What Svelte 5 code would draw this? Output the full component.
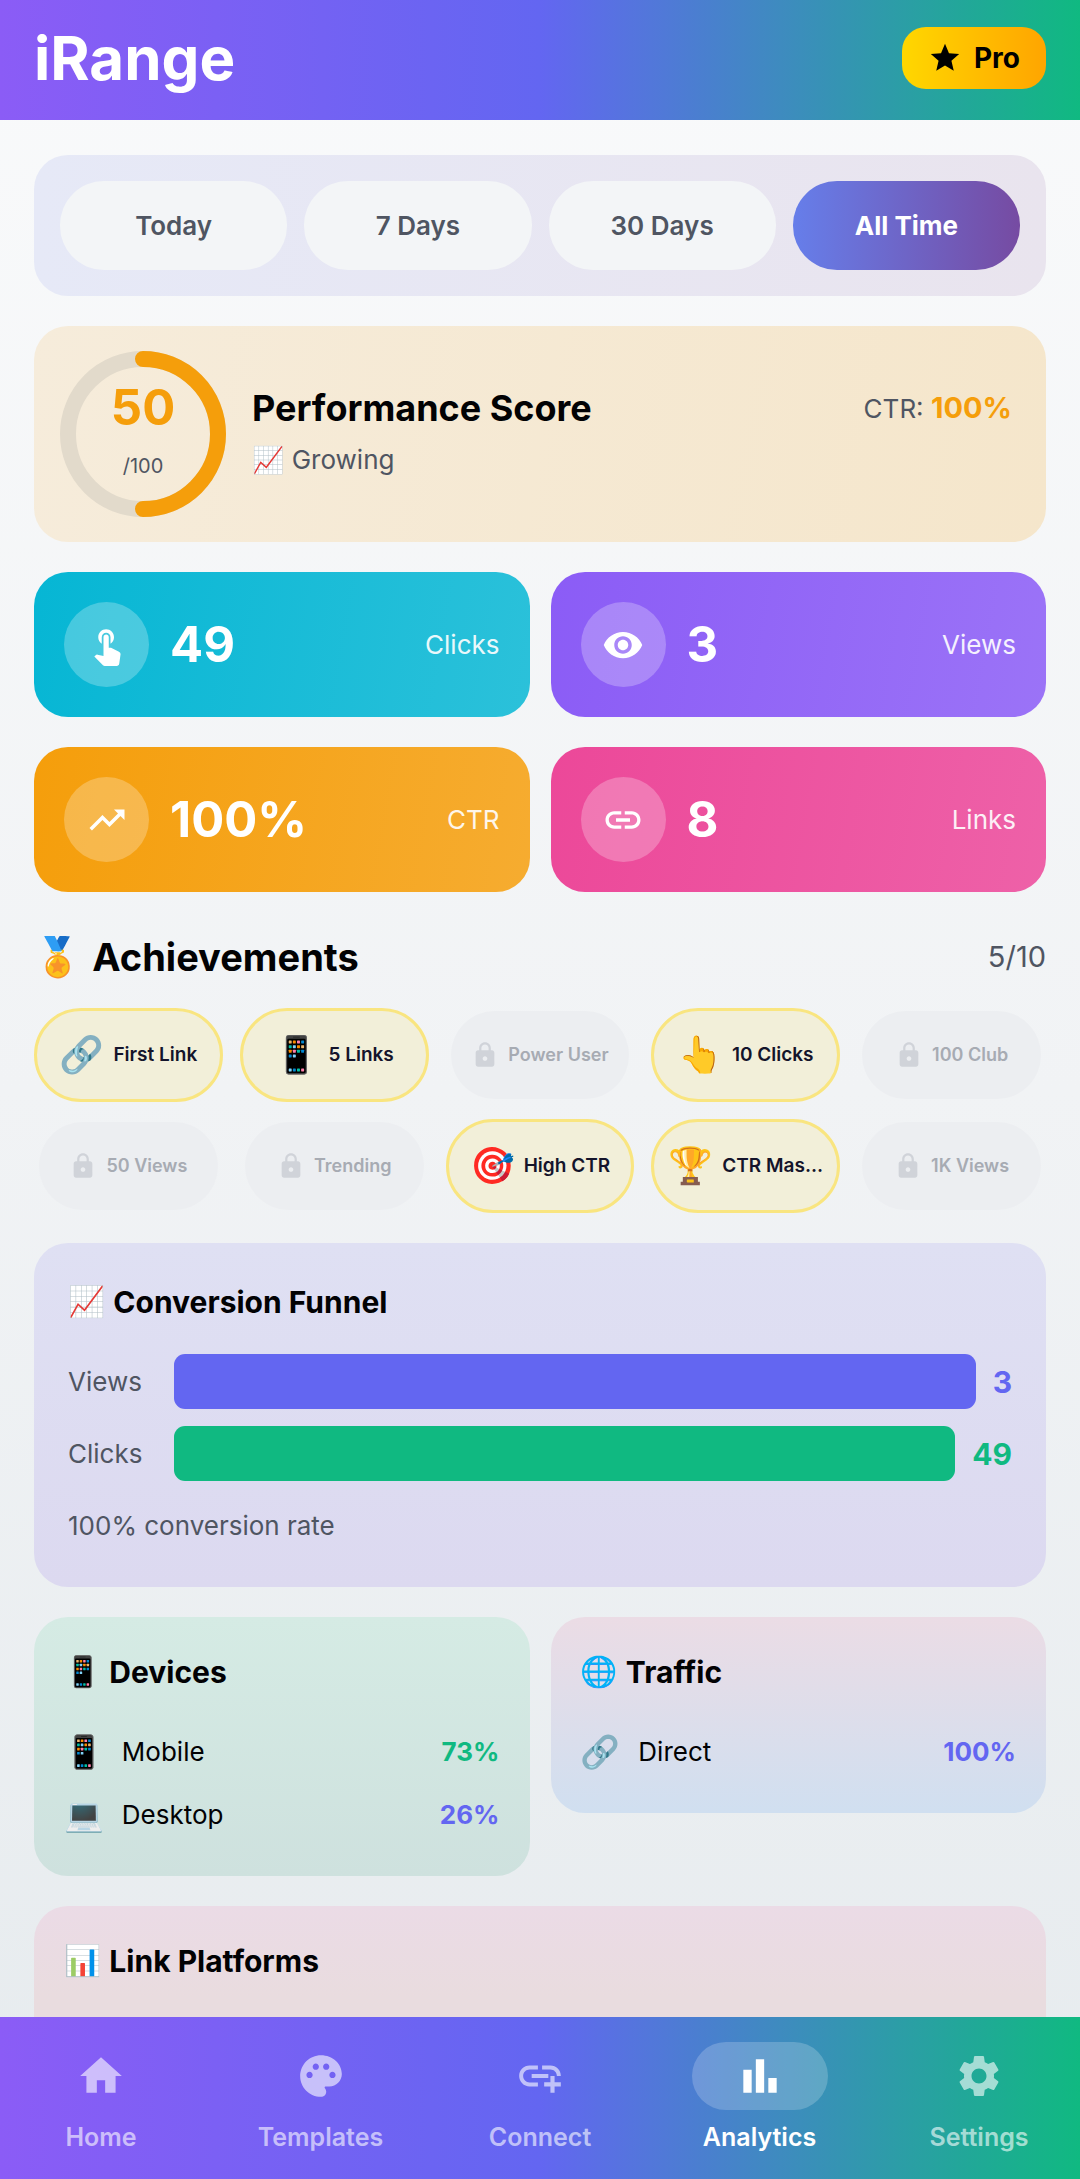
<script>
  const ranges = ['Today', '7 Days', '30 Days', 'All Time'];
  let range = $state('All Time');
  let tab = $state('Analytics');

  const icons = {
    tap: 'M9 11.24V7.5a2.5 2.5 0 0 1 5 0v3.74c1.21-.81 2-2.18 2-3.74C16 5.01 13.99 3 11.5 3S7 5.01 7 7.5c0 1.56.79 2.93 2 3.74zm9.84 4.63-4.54-2.26c-.17-.07-.35-.11-.54-.11H13v-6c0-.83-.67-1.5-1.5-1.5S10 6.67 10 7.5v10.74l-3.43-.72c-.08-.01-.15-.03-.24-.03-.31 0-.59.13-.79.33l-.79.8 4.94 4.94c.27.27.65.44 1.06.44h6.79c.75 0 1.33-.55 1.44-1.28l.75-5.27c.01-.07.02-.14.02-.2 0-.62-.38-1.16-.91-1.38z',
    eye: 'M12 4.5C7 4.5 2.73 7.61 1 12c1.73 4.39 6 7.5 11 7.5s9.27-3.11 11-7.5c-1.73-4.39-6-7.5-11-7.5zM12 17c-2.76 0-5-2.24-5-5s2.24-5 5-5 5 2.24 5 5-2.24 5-5 5zm0-8c-1.66 0-3 1.34-3 3s1.34 3 3 3 3-1.34 3-3-1.34-3-3-3z',
    trend: 'm16 6 2.29 2.29-4.88 4.88-4-4L2 16.59 3.41 18l6-6 4 4 6.3-6.29L22 12V6z',
    link: 'M3.9 12c0-1.71 1.39-3.1 3.1-3.1h4V7H7c-2.76 0-5 2.24-5 5s2.24 5 5 5h4v-1.9H7c-1.71 0-3.1-1.39-3.1-3.1zM8 13h8v-2H8v2zm9-6h-4v1.9h4c1.71 0 3.1 1.39 3.1 3.1s-1.39 3.1-3.1 3.1h-4V17h4c2.76 0 5-2.24 5-5s-2.24-5-5-5z',
    lock: 'M18 8h-1V6c0-2.76-2.24-5-5-5S7 3.24 7 6v2H6c-1.1 0-2 .9-2 2v10c0 1.1.9 2 2 2h12c1.1 0 2-.9 2-2V10c0-1.1-.9-2-2-2zm-6 9c-1.1 0-2-.9-2-2s.9-2 2-2 2 .9 2 2-.9 2-2 2zm3.1-9H8.9V6c0-1.71 1.39-3.1 3.1-3.1s3.1 1.39 3.1 3.1v2z',
    star: 'M12 17.27 18.18 21l-1.64-7.03L22 9.24l-7.19-.61L12 2 9.19 8.63 2 9.24l5.46 4.73L5.82 21z',
    home: 'M10 20v-6h4v6h5v-8h3L12 3 2 12h3v8z',
    palette: 'M12 2C6.49 2 2 6.49 2 12s4.49 10 10 10c1.38 0 2.5-1.12 2.5-2.5 0-.61-.23-1.2-.64-1.67-.08-.1-.13-.21-.13-.33 0-.28.22-.5.5-.5H16c3.31 0 6-2.69 6-6 0-4.96-4.49-9-10-9zm-5.5 11c-.83 0-1.5-.67-1.5-1.5S5.67 10 6.5 10s1.5.67 1.5 1.5S7.33 13 6.5 13zm3-4C8.67 9 8 8.33 8 7.5S8.67 6 9.5 6s1.5.67 1.5 1.5S10.33 9 9.5 9zm5 0c-.83 0-1.5-.67-1.5-1.5S13.67 6 14.5 6s1.5.67 1.5 1.5S15.33 9 14.5 9zm3 4c-.83 0-1.5-.67-1.5-1.5s.67-1.5 1.5-1.5 1.5.67 1.5 1.5-.67 1.5-1.5 1.5z',
    addLink: 'M8 11h8v2H8zm12.1 1H22c0-2.76-2.24-5-5-5h-4v1.9h4c1.71 0 3.1 1.39 3.1 3.1zM3.9 12c0-1.71 1.39-3.1 3.1-3.1h4V7H7c-2.76 0-5 2.24-5 5s2.24 5 5 5h4v-1.9H7c-1.71 0-3.1-1.39-3.1-3.1zM19 12h-2v3h-3v2h3v3h2v-3h3v-2h-3z',
    bars: 'M4 9h4v11H4zm12 4h4v7h-4zm-6-9h4v16h-4z',
    gear: 'M19.14 12.94c.04-.3.06-.61.06-.94 0-.32-.02-.64-.07-.94l2.03-1.58c.18-.14.23-.41.12-.61l-1.92-3.32c-.12-.22-.37-.29-.59-.22l-2.39.96c-.5-.38-1.03-.7-1.62-.94l-.36-2.54c-.04-.24-.24-.41-.48-.41h-3.84c-.24 0-.43.17-.47.41l-.36 2.54c-.59.24-1.13.57-1.62.94l-2.39-.96c-.22-.08-.47 0-.59.22L2.74 8.87c-.12.21-.08.47.12.61l2.03 1.58c-.05.3-.09.63-.09.94s.02.64.07.94l-2.03 1.58c-.18.14-.23.41-.12.61l1.92 3.32c.12.22.37.29.59.22l2.39-.96c.5.38 1.03.7 1.62.94l.36 2.54c.05.24.24.41.48.41h3.84c.24 0 .44-.17.47-.41l.36-2.54c.59-.24 1.13-.56 1.62-.94l2.39.96c.22.08.47 0 .59-.22l1.92-3.32c.12-.22.07-.47-.12-.61l-2.01-1.58zM12 15.6c-1.98 0-3.6-1.62-3.6-3.6s1.62-3.6 3.6-3.6 3.6 1.62 3.6 3.6-1.62 3.6-3.6 3.6z',
  };

  const stats = [
    { icon: 'tap', value: '49', label: 'Clicks', tone: 'cyan' },
    { icon: 'eye', value: '3', label: 'Views', tone: 'violet' },
    { icon: 'trend', value: '100%', label: 'CTR', tone: 'amber' },
    { icon: 'link', value: '8', label: 'Links', tone: 'pink' },
  ];

  const badges = [
    { name: 'First Link', emoji: '🔗' },
    { name: '5 Links', emoji: '📱' },
    { name: 'Power User' },
    { name: '10 Clicks', emoji: '👆' },
    { name: '100 Club' },
    { name: '50 Views' },
    { name: 'Trending' },
    { name: 'High CTR', emoji: '🎯' },
    { name: 'CTR Mas...', emoji: '🏆' },
    { name: '1K Views' },
  ];

  const funnel = [
    { label: 'Views', value: 3, tone: 'indigo' },
    { label: 'Clicks', value: 49, tone: 'green' },
  ];

  const breakdowns = [
    {
      title: 'Devices',
      emoji: '📱',
      kind: 'devices',
      rows: [
        { emoji: '📱', name: 'Mobile', share: '73%', tone: 'green' },
        { emoji: '💻', name: 'Desktop', share: '26%', tone: 'indigo' },
      ],
    },
    {
      title: 'Traffic',
      emoji: '🌐',
      kind: 'traffic',
      rows: [{ emoji: '🔗', name: 'Direct', share: '100%', tone: 'indigo' }],
    },
  ];

  const tabs = [
    { name: 'Home', icon: 'home' },
    { name: 'Templates', icon: 'palette' },
    { name: 'Connect', icon: 'addLink' },
    { name: 'Analytics', icon: 'bars' },
    { name: 'Settings', icon: 'gear' },
  ];
</script>

{#snippet icon(name)}
  <svg class="icon" viewBox="0 0 24 24" aria-hidden="true"><path d={icons[name]} /></svg>
{/snippet}

<div class="app">
  <header class="topbar">
    <h1>iRange</h1>
    <button class="pro">{@render icon('star')}Pro</button>
  </header>

  <main>
    <div class="ranges">
      {#each ranges as r}
        <button class="range" class:active={range === r} onclick={() => (range = r)}>{r}</button>
      {/each}
    </div>

    <section class="score">
      <div class="ring">
        <svg viewBox="0 0 166 166" aria-hidden="true">
          <circle class="track" cx="83" cy="83" r="75" />
          <path class="arc" d="M83 8a75 75 0 0 1 0 150" />
        </svg>
        <div class="ring-text">
          <strong>50</strong>
          <span>/100</span>
        </div>
      </div>
      <div class="score-info">
        <h2>Performance Score</h2>
        <p><span class="emoji">📈</span> Growing</p>
      </div>
      <p class="ctr">CTR: <strong>100%</strong></p>
    </section>

    <section class="stats">
      {#each stats as s}
        <div class="stat {s.tone}">
          <span class="bubble">{@render icon(s.icon)}</span>
          <strong>{s.value}</strong>
          <span class="label">{s.label}</span>
        </div>
      {/each}
    </section>

    <section class="achievements">
      <div class="section-head">
        <span class="emoji">🏅</span>
        <h2>Achievements</h2>
        <span class="count">5/10</span>
      </div>
      <ul class="badges">
        {#each badges as b}
          <li class="badge" class:locked={!b.emoji}>
            {#if b.emoji}<span class="emoji">{b.emoji}</span>{:else}{@render icon('lock')}{/if}
            <span>{b.name}</span>
          </li>
        {/each}
      </ul>
    </section>

    <section class="funnel">
      <h3><span class="emoji">📈</span>Conversion Funnel</h3>
      {#each funnel as f}
        <div class="funnel-row">
          <span class="name">{f.label}</span>
          <div class="bar {f.tone}"></div>
          <strong class="{f.tone}-text">{f.value}</strong>
        </div>
      {/each}
      <p>100% conversion rate</p>
    </section>

    <div class="breakdowns">
      {#each breakdowns as b}
        <section class="panel {b.kind}">
          <h3><span class="emoji">{b.emoji}</span>{b.title}</h3>
          {#each b.rows as row}
            <div class="row">
              <span class="emoji">{row.emoji}</span>
              <span>{row.name}</span>
              <strong class="{row.tone}-text">{row.share}</strong>
            </div>
          {/each}
        </section>
      {/each}
    </div>

    <section class="panel platforms">
      <h3><span class="emoji">📊</span>Link Platforms</h3>
    </section>
  </main>

  <nav class="tabbar">
    {#each tabs as t}
      <button class="tab" class:active={tab === t.name} onclick={() => (tab = t.name)}>
        <span class="pill">{@render icon(t.icon)}</span>
        {t.name}
      </button>
    {/each}
  </nav>
</div>

<style>
  :global(body) {
    margin: 0;
  }

  .app {
    --ink: #020204;
    --muted: #4f5562;
    --indigo: #6366f1;
    --green: #10b981;
    --amber: #f59e0b;
    display: flex;
    flex-direction: column;
    height: 100vh;
    overflow: hidden;
    background: linear-gradient(#f9fafb, #f1f3f5 50%, #e6ebee);
    color: var(--ink);
    font-family: Inter, 'Noto Color Emoji', sans-serif;
    font-size: 26px;
    line-height: 36px;
  }

  .app :is(h1, h2, h3, p, ul) {
    margin: 0;
    padding: 0;
  }

  button {
    border: none;
    background: none;
    font: inherit;
    color: inherit;
    cursor: pointer;
  }

  .icon {
    display: block;
    flex: none;
    width: 42px;
    height: 42px;
    fill: currentColor;
  }

  .emoji {
    flex: none;
    font-family: 'Noto Color Emoji', sans-serif;
    font-weight: 400;
  }

  .topbar,
  .tabbar {
    flex: none;
    display: flex;
    justify-content: space-between;
    background: linear-gradient(90deg, #8b5cf6, #6366f1 50%, #10b981);
    color: #fff;
  }

  .topbar {
    box-sizing: border-box;
    align-items: center;
    height: 120px;
    padding: 0 34px 4px;
  }

  h1 {
    font-size: 60px;
    line-height: 72px;
    font-weight: 700;
  }

  .pro {
    display: flex;
    align-items: center;
    gap: 12px;
    height: 62px;
    padding: 0 26px;
    border-radius: 24px;
    background: linear-gradient(90deg, #ffd700, #ffa500);
    color: #000;
    font-size: 28px;
    font-weight: 700;
  }

  .pro .icon {
    width: 34px;
    height: 34px;
  }

  main {
    flex: 1;
    min-height: 0;
    display: flex;
    flex-direction: column;
    gap: 30px;
    padding: 35px 34px 0;
    overflow-y: auto;
    scrollbar-width: none;
  }

  main > * {
    flex: none;
  }

  .ranges {
    display: grid;
    grid-template-columns: repeat(4, 1fr);
    gap: 17px;
    padding: 26px;
    border-radius: 34px;
    background: linear-gradient(90deg, #e6e9f7, #e9e4ee);
  }

  .range {
    height: 89px;
    border-radius: 44px;
    background: #f3f5f7;
    color: var(--muted);
    font-weight: 600;
  }

  .range.active {
    background: linear-gradient(90deg, #667eea, #764ba2);
    color: #fff;
    font-weight: 700;
  }

  .score {
    display: flex;
    align-items: center;
    gap: 26px;
    padding: 25px 34px 25px 26px;
    border-radius: 34px;
    background: linear-gradient(100deg, #f6ecdb, #f5e6cb);
  }

  .ring {
    display: grid;
    width: 166px;
    height: 166px;
  }

  .ring > * {
    grid-area: 1 / 1;
  }

  .ring circle,
  .ring path {
    fill: none;
    stroke-width: 16;
    stroke-linecap: round;
  }

  .track {
    stroke: #e2dacb;
  }

  .arc {
    stroke: var(--amber);
  }

  .ring-text {
    display: flex;
    flex-direction: column;
    align-items: center;
    justify-content: center;
    color: var(--muted);
    font-size: 20px;
    line-height: 52px;
  }

  .ring-text strong {
    color: var(--amber);
    font-size: 49px;
    line-height: 64px;
  }

  .score-info {
    flex: 1;
  }

  .score h2 {
    font-size: 36px;
    line-height: 52px;
  }

  .score p {
    line-height: 52px;
    color: var(--muted);
  }

  .score .ctr {
    align-self: flex-start;
    padding-top: 31px;
  }

  .ctr strong {
    color: var(--amber);
    font-size: 29px;
  }

  .stats {
    display: grid;
    grid-template-columns: 1fr 1fr;
    gap: 30px 21px;
  }

  .stat {
    display: flex;
    align-items: center;
    gap: 21px;
    padding: 30px;
    border-radius: 34px;
    color: #fff;
  }

  .stat strong {
    flex: 1;
    font-size: 49px;
    line-height: 60px;
  }

  .cyan {
    background: linear-gradient(100deg, #06b6d4, #2bc1da);
  }

  .violet {
    background: linear-gradient(100deg, #8b5cf6, #9b73f7);
  }

  .amber {
    background: linear-gradient(100deg, #f59e0b, #f6ac30);
  }

  .pink {
    background: linear-gradient(100deg, #ec4899, #ee61a8);
  }

  .bubble {
    display: grid;
    place-items: center;
    width: 85px;
    height: 85px;
    border-radius: 50%;
    background: rgb(255 255 255 / 0.25);
  }

  .label {
    opacity: 0.9;
  }

  .section-head {
    display: flex;
    align-items: center;
    gap: 11px;
    height: 70px;
    margin-bottom: 16px;
  }

  .section-head .emoji {
    font-size: 38px;
  }

  .section-head h2 {
    flex: 1;
    font-size: 38px;
    line-height: 48px;
  }

  .count {
    color: var(--muted);
    font-size: 29px;
  }

  .badges {
    display: grid;
    grid-template-columns: repeat(5, 1fr);
    gap: 17px;
    list-style: none;
  }

  .badge {
    box-sizing: border-box;
    display: flex;
    align-items: center;
    justify-content: center;
    gap: 9px;
    height: 94px;
    border: 3px solid #f9e580;
    border-radius: 47px;
    background: #f2efd9;
    color: #14142b;
    font-size: 19px;
    font-weight: 600;
    white-space: nowrap;
  }

  .badge .emoji {
    font-size: 36px;
  }

  .badge.locked {
    height: 88px;
    margin: 3px 5px;
    border: none;
    background: #eceef1;
    color: #a7abb3;
    font-size: 18px;
  }

  .badge .icon {
    width: 28px;
    height: 28px;
    color: #d0d3d9;
  }

  .funnel {
    display: flex;
    flex-direction: column;
    gap: 17px;
    padding: 34px;
    border-radius: 34px;
    background: linear-gradient(#dfe0f3, #dcd9f0);
  }

  h3 {
    display: flex;
    align-items: center;
    gap: 8px;
    font-size: 30px;
    line-height: 50px;
  }

  .funnel h3 {
    margin-bottom: 10px;
  }

  .funnel-row {
    display: flex;
    align-items: center;
    gap: 17px;
    color: var(--muted);
  }

  .funnel-row .name {
    width: 89px;
  }

  .funnel-row strong {
    font-size: 30px;
  }

  .bar {
    flex: 1;
    height: 55px;
    border-radius: 11px;
  }

  .indigo {
    background: var(--indigo);
  }

  .green {
    background: var(--green);
  }

  .indigo-text {
    color: var(--indigo);
  }

  .green-text {
    color: var(--green);
  }

  .funnel p {
    color: var(--muted);
    line-height: 55px;
  }

  .funnel h3 {
    margin-bottom: 10px;
  }

  .breakdowns {
    display: grid;
    grid-template-columns: 1fr 1fr;
    gap: 21px;
    align-items: start;
  }

  .panel {
    padding: 30px;
    border-radius: 34px;
  }

  .panel h3 {
    margin-bottom: 23px;
  }

  .row {
    display: flex;
    align-items: center;
    gap: 18px;
    height: 63px;
  }

  .row .emoji {
    font-size: 32px;
  }

  .row strong {
    margin-left: auto;
  }

  .devices {
    background: linear-gradient(#d5ebe4, #cee1de);
  }

  .traffic {
    background: linear-gradient(#ebdce5, #d0dff0);
  }

  .platforms {
    min-height: 240px;
    background: linear-gradient(#ebdbe6, #e9dcdf 30%, #e9dcdf);
  }

  .tabbar {
    padding: 25px 33px 22px;
  }

  .tab {
    display: flex;
    flex-direction: column;
    align-items: center;
    gap: 7px;
    width: 136px;
    padding: 0;
    color: rgb(255 255 255 / 0.6);
    font-size: 25px;
    line-height: 40px;
    font-weight: 600;
  }

  .pill {
    display: grid;
    place-items: center;
    width: 100%;
    height: 68px;
    border-radius: 34px;
  }

  .pill .icon {
    width: 50px;
    height: 50px;
  }

  .tab.active {
    color: #fff;
  }

  .tab.active .pill {
    background: rgb(255 255 255 / 0.2);
  }
</style>
